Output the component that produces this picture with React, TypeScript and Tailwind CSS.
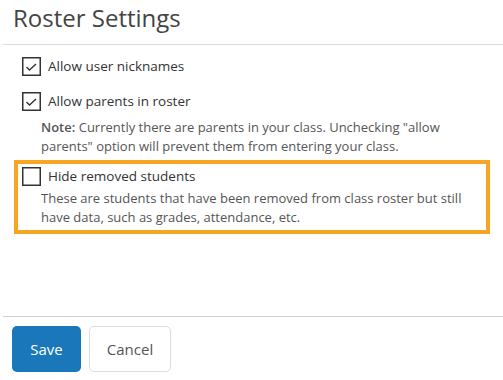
import { ReactNode } from "react";

const Box = ({ checked }: { checked?: boolean }) => (
    <svg width="19" height="19" viewBox="0 0 19 19" className="shrink-0">
        <rect x="0.75" y="0.75" width="17.5" height="17.5" fill="white" stroke="#333" strokeWidth="1.5" />
        {checked && <path d="M4.5 10 L7.5 13 L14 7" fill="none" stroke="#333" strokeWidth="1.4" />}
    </svg>
);

const Option = ({ checked, label, children, gap }: { checked?: boolean; label: string; children?: ReactNode; gap: string }) => (
    <div className="flex flex-col">
        <label className="flex items-center gap-[7px]">
            <Box checked={checked} />
            <span className="text-[13.5px] leading-[19px] text-[#333]">{label}</span>
        </label>
        {children && <div className={`pl-[19px] text-[13px] leading-[19px] text-[#555] ${gap}`}>{children}</div>}
    </div>
);

export default function App() {
    return (
        <div className="flex h-[380px] w-[503px] flex-col bg-white" style={{ fontFamily: '"Open Sans", sans-serif' }}>
            <div className="ml-[3px] h-[45px] border-b border-[#dcdcdc] pl-[10px]">
                <h1 className="text-[24px] leading-[36px] text-[#444]">Roster Settings</h1>
            </div>
            <div className="flex flex-1 flex-col pt-[12px]">
                <div className="pl-[22px]">
                    <Option checked label="Allow user nicknames" gap="pt-[7px]" />
                </div>
                <div className="pl-[22px] pr-[34px] pt-[16px]">
                    <Option checked label="Allow parents in roster" gap="pt-[7px]">
                        <b className="font-semibold">Note:</b> Currently there are parents in your class. Unchecking "allow
                        parents" option will prevent them from entering your class.
                    </Option>
                </div>
                <div className="ml-[14px] mr-[13px] mt-[4px] border-[4px] border-[#f6a623] pb-[3px] pl-[4px] pt-[3px]">
                    <Option label="Hide removed students" gap="pt-[3px]">
                        These are students that have been removed from class roster but still have data, such as grades,
                        attendance, etc.
                    </Option>
                </div>
            </div>
            <div className="ml-[3px] flex h-[64px] gap-[8px] border-t border-[#d0d0d0] pl-[9px] pt-[9px]">
                <button className="h-[46px] w-[69px] rounded-[5px] bg-[#1a77b9] text-[15px] text-white">Save</button>
                <button className="h-[46px] w-[82px] rounded-[5px] border border-[#ddd] bg-white text-[15px] text-[#555]">
                    Cancel
                </button>
            </div>
        </div>
    );
}
